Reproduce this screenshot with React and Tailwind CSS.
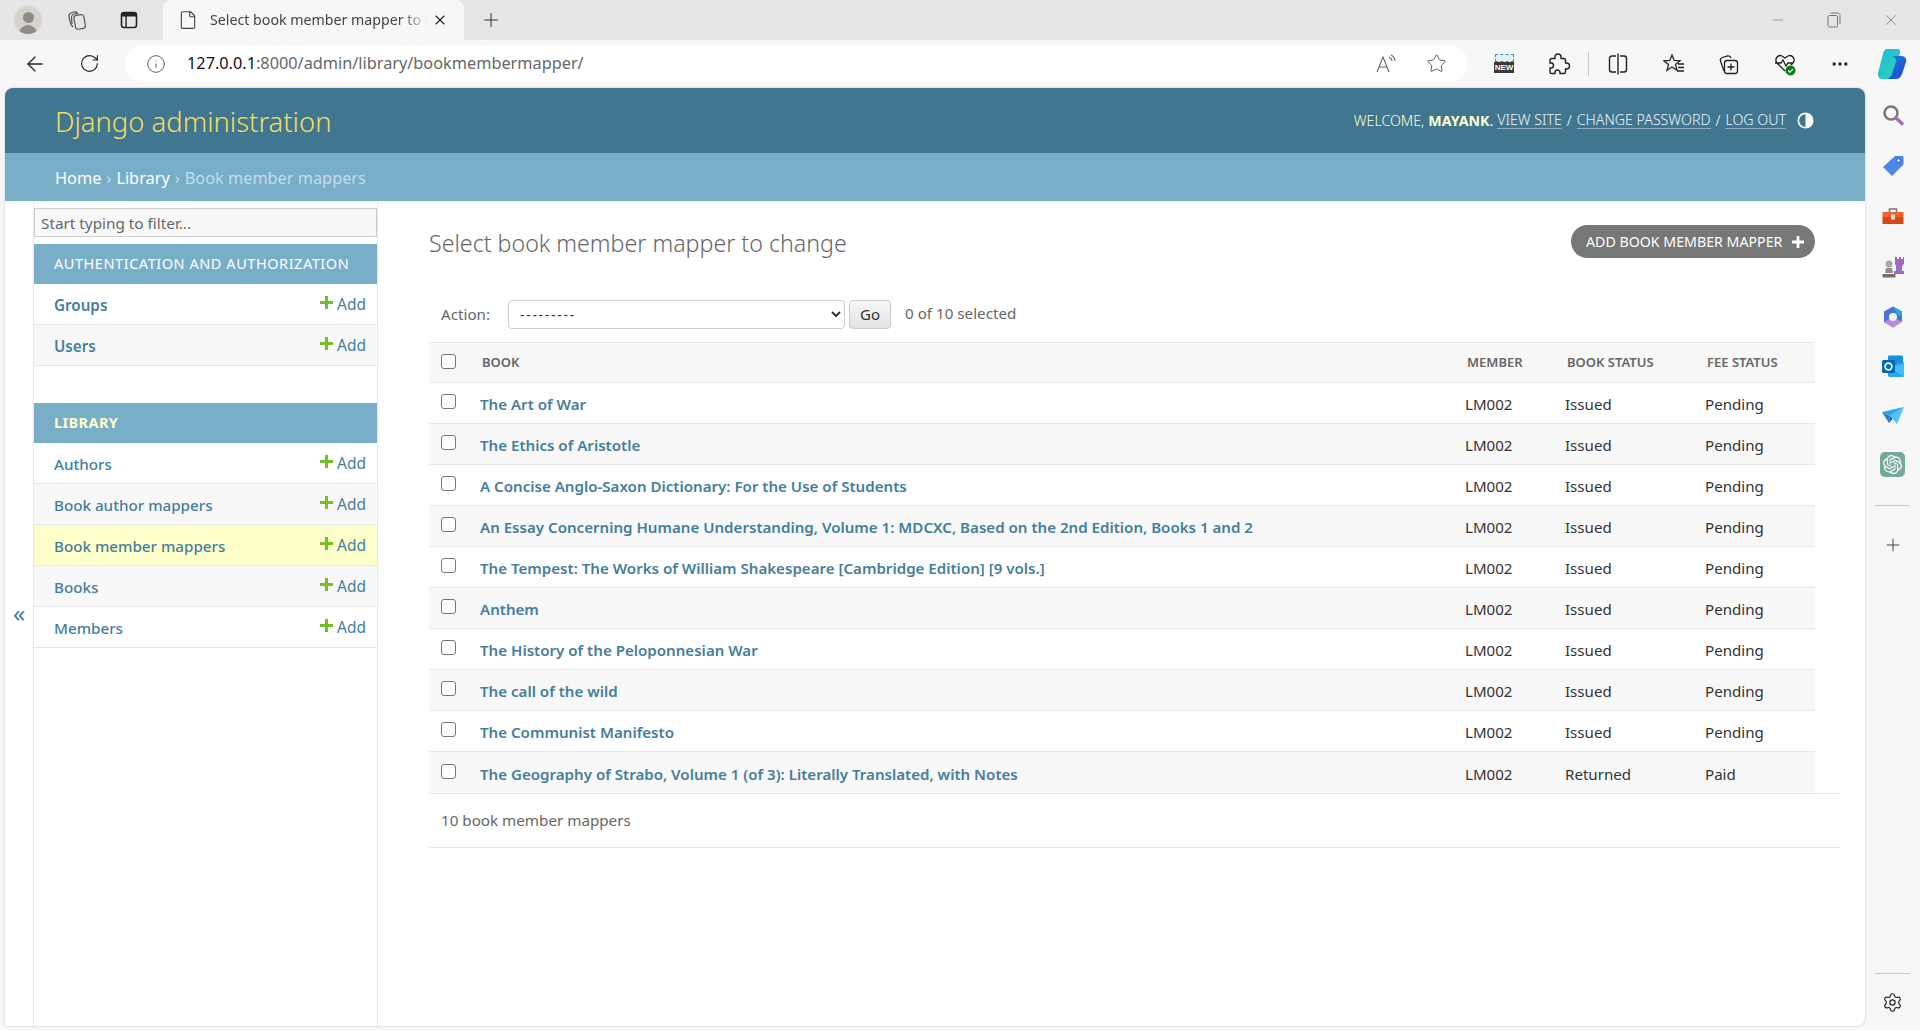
import React from 'react';
import { ArrowLeft, RotateCw, Info, Star, X, Plus, Minus, File, Settings, Ellipsis } from 'lucide-react';
import { SiOpenai } from 'react-icons/si';

const rows = [
  ['The Art of War', 'Issued', 'Pending'],
  ['The Ethics of Aristotle', 'Issued', 'Pending'],
  ['A Concise Anglo-Saxon Dictionary: For the Use of Students', 'Issued', 'Pending'],
  ['An Essay Concerning Humane Understanding, Volume 1: MDCXC, Based on the 2nd Edition, Books 1 and 2', 'Issued', 'Pending'],
  ['The Tempest: The Works of William Shakespeare [Cambridge Edition] [9 vols.]', 'Issued', 'Pending'],
  ['Anthem', 'Issued', 'Pending'],
  ['The History of the Peloponnesian War', 'Issued', 'Pending'],
  ['The call of the wild', 'Issued', 'Pending'],
  ['The Communist Manifesto', 'Issued', 'Pending'],
  ['The Geography of Strabo, Volume 1 (of 3): Literally Translated, with Notes', 'Returned', 'Paid'],
];

const PlusMark = ({ color = '#70bf2b', size = 13 }) => (
  <svg width={size} height={size} viewBox="0 0 13 13" className="shrink-0">
    <path d="M5 0h3v5h5v3H8v5H5V8H0V5h5z" fill={color} />
  </svg>
);

const Checkbox = () => (
  <input
    type="checkbox"
    readOnly
    className="appearance-none w-[15px] h-[15px] bg-white border border-[#767676] rounded-[3px] block"
  />
);

const ModelRow = ({ name, alt, active, strong }) => (
  <div
    className={`h-[41px] pt-[2px] flex items-center justify-between pl-5 pr-[11px] border-b border-[#e8e8e8] ${
      active ? 'bg-[#ffffcc]' : alt ? 'bg-[#f8f8f8]' : 'bg-white'
    }`}
  >
    <span className={`text-[15.200px] text-[#447e9b] ${strong ? 'font-semibold' : 'font-medium'}`}>{name}</span>
    <span className="flex items-center gap-[4px] text-[15.500px] text-[#447e9b]">
      <span className="-mt-[5px]"><PlusMark /></span>
      Add
    </span>
  </div>
);

const TabStrip = () => (
  <div className="h-10 bg-[#e6e6e6] flex items-center shrink-0 text-[#333]">
    <div className="ml-[14px] w-7 h-7 rounded-full bg-[#d6d3cf] flex flex-col items-center justify-end overflow-hidden">
      <div className="w-[11px] h-[11px] rounded-full bg-[#8f8b85] mb-[2px]" />
      <div className="w-[18px] h-[9px] rounded-t-full bg-[#8f8b85]" />
    </div>
    <svg width="22" height="22" viewBox="0 0 22 22" fill="none" stroke="#555" strokeWidth="1.2" className="ml-[24px]">
      <rect x="8.500" y="6" width="10" height="14" rx="2.500" transform="rotate(-10 13 12)" />
      <path d="M7 18c-1-1-2-2-2.500-4L3 8c-.4-2 .5-3.500 2-4l3-1c1.500-.3 3 0 4 2" />
      <path d="M6 15 5.500 8c0-1.500 1-2.500 2.500-3l4-.5" />
    </svg>
    <svg width="18" height="18" viewBox="0 0 18 18" fill="none" className="ml-[32px]">
      <rect x="1.500" y="1.500" width="15" height="15" rx="2.500" stroke="#222" strokeWidth="1.600" />
      <path d="M2 2h14v3.500H2z" fill="#222" />
      <path d="M6 5v11" stroke="#222" strokeWidth="1.400" />
    </svg>
    <div className="ml-[25px] w-[301px] h-10 bg-[#f7f7f7] rounded-t-lg flex items-center pl-[15px]">
      <File size={20} strokeWidth={1.3} className="text-[#444]" />
      <span className="ml-[12px] w-[218px] overflow-hidden whitespace-nowrap text-[14.200px] text-[#444] [mask-image:linear-gradient(to_right,black_88%,transparent)]">
        Select book member mapper to change
      </span>
      <X size={16} strokeWidth={1.6} className="ml-[4px] text-[#222]" />
    </div>
    <Plus size={22} strokeWidth={1.1} className="ml-[16px] text-[#333]" />
    <div className="ml-auto flex items-center gap-[41px] pr-[20px] text-[#777]">
      <Minus size={16} strokeWidth={1} />
      <svg width="14" height="16" viewBox="0 0 14 16" fill="none" stroke="#777" strokeWidth="1">
        <rect x="1" y="3.500" width="9.500" height="11.500" rx="1.500" />
        <path d="M3.500 1h7c1.500 0 2.500 1 2.500 2.500V12" />
      </svg>
      <X size={18} strokeWidth={1} />
    </div>
  </div>
);

const Toolbar = () => (
  <div className="h-[48px] bg-[#f7f7f7] flex items-start pt-[5px] shrink-0">
    <div className="w-[125px] h-[37px] flex items-center">
      <ArrowLeft size={24} strokeWidth={1.3} className="ml-[23px] text-[#222]" />
      <RotateCw size={21} strokeWidth={1.3} className="ml-[32px] text-[#222]" />
    </div>
    <div className="w-[1343px] h-[37px] bg-white rounded-full flex items-center pl-[21px] pr-[21px]">
      <Info size={20} strokeWidth={1.1} className="text-[#555]" />
      <span className="ml-[21px] text-[16.300px] text-[#666]">
        <span className="text-[#111]">127.0.0.1</span>:8000/admin/library/bookmembermapper/
      </span>
      <span className="ml-auto flex items-center gap-[28px] text-[#555]">
        <svg width="24" height="24" viewBox="0 0 24 24" fill="none" stroke="#666" strokeWidth="1.100">
          <path d="M3 20 9 5l6 15M5 15h8M15 5c2 1 3 2 3 4M17 3c3 1.500 4 4 4 6" />
        </svg>
        <Star size={21} strokeWidth={1.1} />
      </span>
    </div>
    <div className="h-[37px] flex items-center">
      <div className="ml-[26px] w-[20px] flex flex-col items-center">
        <div className="w-[19px] h-[8px] border border-dashed border-[#3a95b5] bg-[#dff1f7]" />
        <div className="w-[20px] h-[11px] bg-[#3a3a3a] text-white text-[8px] font-bold leading-[11px] text-center font-['Liberation_Sans',sans-serif]">NEW</div>
      </div>
      <svg width="24" height="24" viewBox="0 0 24 24" fill="none" stroke="#222" strokeWidth="1.400" className="ml-[33px]">
        <path d="M8 6.500V5a3 3 0 0 1 6 0v1.500h3A1.500 1.500 0 0 1 18.500 8v3h1a3 3 0 0 1 0 6h-1v3a1.500 1.500 0 0 1-1.500 1.500H13v-1a2.500 2.500 0 0 0-5 0v1H4.500A1.500 1.500 0 0 1 3 20v-4h1a2.500 2.500 0 0 0 0-5H3V8a1.500 1.500 0 0 1 1.500-1.500z" />
      </svg>
      <div className="ml-[17px] w-px h-[24px] bg-[#c8c8c8]" />
      <svg width="20" height="24" viewBox="0 0 20 24" fill="none" stroke="#222" strokeWidth="1.400" className="ml-[19px]">
        <path d="M8 4H4C2.500 4 1.500 5 1.500 6.500v11C1.500 19 2.500 20 4 20h4M12 4h4c1.500 0 2.500 1 2.500 2.500v11c0 1.500-1 2.500-2.500 2.500h-4M10 1.500v21" />
      </svg>
      <svg width="22" height="22" viewBox="0 0 22 22" fill="none" stroke="#222" strokeWidth="1.300" className="ml-[35px]">
        <path d="m9 2 2.200 5.500 5.800.4-4.500 3.700 1.500 5.600L9 14l-5 3.200 1.500-5.600L1 7.900l5.800-.4zM15 11h6M15 14.500h6M14 18h7" />
      </svg>
      <svg width="22" height="22" viewBox="0 0 22 22" fill="none" stroke="#222" strokeWidth="1.300" className="ml-[33px]">
        <rect x="6.500" y="7.500" width="13" height="13" rx="2.500" />
        <path d="M13 10.500v7M9.500 14h7M6 18 2.500 8c-.5-2 .3-3 2-3.500l5-1.500c2-.4 3 .5 3.500 2" />
      </svg>
      <svg width="24" height="24" viewBox="0 0 24 24" fill="none" className="ml-[33px]">
        <path d="M12 19 4 11C1 7 5 2 9 4l3 2 3-2c4-2 8 3 5 7l-2 2M2 11h6l2-3 3 6 2-3h5" stroke="#222" strokeWidth="1.300" />
        <circle cx="17.500" cy="18.500" r="5" fill="#107c10" />
        <path d="m15.300 18.500 1.600 1.600 3-3" stroke="#fff" strokeWidth="1.300" />
      </svg>
      <Ellipsis size={20} strokeWidth={2} className="ml-[33px] text-[#222]" />
      <svg width="30" height="32" viewBox="0 0 30 32" className="ml-[27px]">
        <defs>
          <linearGradient id="cpa" x1="0" y1="0" x2="1" y2="1">
            <stop offset="0" stopColor="#1db6e8" />
            <stop offset="1" stopColor="#2fd9a6" />
          </linearGradient>
          <linearGradient id="cpb" x1="0" y1="0" x2="1" y2="1">
            <stop offset="0" stopColor="#1a7fe0" />
            <stop offset="1" stopColor="#2246c8" />
          </linearGradient>
        </defs>
        <path d="M10 1h10c3 0 3.500 2 3 4L17 26c-1 3-3 5-6 5H5c-3 0-4.500-3-4-6l5-19c.5-3 2-5 4-5z" fill="url(#cpa)" />
        <path d="M15 8h9c4 0 6 3 5 6l-4 12c-1 3-3 5-7 5h-8c3-1 4-3 5-5l4-13c.5-2-1-4-4-5z" fill="url(#cpb)" />
      </svg>
    </div>
  </div>
);

const Rail = () => (
  <div className="w-[55px] flex flex-col items-center shrink-0 pt-[15px]">
    <svg width="24" height="24" viewBox="0 0 24 24" fill="none">
      <circle cx="10" cy="10" r="6.500" stroke="#777" strokeWidth="2.500" />
      <path d="m15.500 15.500 5.500 5" stroke="#a06cc8" strokeWidth="3.500" strokeLinecap="round" />
    </svg>
    <svg width="24" height="24" viewBox="0 0 24 24" className="mt-[27px]">
      <path d="M14 2h7c1 0 1.500.5 1.500 1.500v7L11 22 2 13z" fill="#4f87e6" />
      <circle cx="17.500" cy="6.500" r="2" fill="#d9e6fb" stroke="#2b5bb5" />
    </svg>
    <svg width="24" height="24" viewBox="0 0 24 24" className="mt-[27px]">
      <path d="M8.500 7V4h7v3" fill="none" stroke="#777" strokeWidth="1.600" />
      <path d="M1.500 7h21v5h-21z" fill="#f2622e" />
      <path d="M1.500 12h21v7h-21z" fill="#d24a17" />
      <rect x="10" y="9.500" width="4" height="5" fill="#d9d9d9" />
    </svg>
    <svg width="24" height="24" viewBox="0 0 24 24" className="mt-[26px]">
      <path d="M14 2h2v2h2V2h2v2h2V2h1v7l-2 2v5h2v3h-10v-3h2v-5l-1-2z" fill="#9a6cc8" />
      <circle cx="8" cy="9" r="3.500" fill="#a8a8a8" />
      <path d="M5 13h6l1 5H4z" fill="#8f8f8f" />
      <path d="M1.500 19h13v3.500h-13z" fill="#6f6f6f" />
    </svg>
    <svg width="24" height="24" viewBox="0 0 24 24" fill="none" className="mt-[26px]">
      <path d="M12 1.500 21 6.500v10L12 22.500 3 17V6.500z" fill="#4a6fd8" />
      <path d="M12 1.500 21 6.500v6l-5-3c-1-4-4-6-4-8z" fill="#2aa8d8" />
      <path d="M3 17 12 22.500 21 17l-5-3c-2 2-6 2-8 0z" fill="#b98ae0" />
      <circle cx="12" cy="12" r="4" fill="#f7f7f7" />
    </svg>
    <svg width="24" height="24" viewBox="0 0 24 24" className="mt-[25px]">
      <rect x="7" y="1.500" width="15" height="21" rx="1" fill="#1490df" />
      <path d="M9 12 23 8v14a1 1 0 0 1-1 1H8z" fill="#28a8ea" />
      <path d="m8 13 15 10V10z" fill="#50d9ff" opacity="0.500" />
      <rect x="1" y="6" width="13" height="13" rx="1.500" fill="#0364b8" />
      <circle cx="7.500" cy="12.500" r="3.400" fill="none" stroke="#fff" strokeWidth="1.700" />
    </svg>
    <svg width="24" height="24" viewBox="0 0 24 24" className="mt-[25px]">
      <path d="M1 9 23 4 9 13z" fill="#29a9eb" />
      <path d="M23 4 16 21 9 13z" fill="#54c2f2" />
      <path d="M9 13 8 20l3.500-4z" fill="#0b5ea8" />
      <path d="M1 9l7 11 1-7z" fill="#1b7fc8" />
    </svg>
    <div className="mt-[25px] w-[25px] h-[25px] rounded-[5px] bg-[#74aa9c] flex items-center justify-center">
      <SiOpenai size={19} color="#fff" />
    </div>
    <div className="mt-[28px] w-[35px] h-px bg-[#c8c8c8]" />
    <Plus size={20} strokeWidth={1.2} className="mt-[29px] text-[#444]" />
    <div className="mt-auto w-[35px] h-px bg-[#c8c8c8]" />
    <Settings size={21} strokeWidth={1.3} className="mt-[18px] mb-[17px] text-[#222]" />
  </div>
);

const Sidebar = () => (
  <div className="w-[345px] shrink-0 border-x border-[#e8e8e8] -mr-px">
    <div className="pt-[7px] pb-[7px]">
      <input
        readOnly
        placeholder="Start typing to filter..."
        className="block w-full h-[29px] px-[6px] text-[15.300px] bg-[#f8f8f8] border border-[#cccccc] placeholder:text-[#666]"
      />
    </div>
    <div className="h-10 bg-[#79aec8] flex items-center pl-5 text-[14.500px] tracking-[0.55px] text-white whitespace-nowrap">
      AUTHENTICATION AND AUTHORIZATION
    </div>
    <ModelRow name="Groups" strong />
    <ModelRow name="Users" alt strong />
    <div className="mt-[37px] h-10 bg-[#79aec8] flex items-center pl-5 text-[14.500px] font-bold tracking-[0.4px] text-[#ffffcc]">
      LIBRARY
    </div>
    <ModelRow name="Authors" />
    <ModelRow name="Book author mappers" alt />
    <ModelRow name="Book member mappers" active />
    <ModelRow name="Books" alt />
    <ModelRow name="Members" />
  </div>
);

const Changelist = () => (
  <div className="flex-1 min-w-0 pl-[52px] pr-[25px] text-[#333]">
    <div className="pt-6 pr-[25px] flex items-start justify-between">
      <h1 className="mt-[2px] text-[23.200px] leading-[33px] font-light text-[#666]">Select book member mapper to change</h1>
      <div className="h-[33px] w-[244px] rounded-full bg-[#777777] flex items-center justify-between pl-[15px] pr-[11px] text-[14.200px] text-white whitespace-nowrap">
        ADD BOOK MEMBER MAPPER
        <PlusMark color="#fff" size={12} />
      </div>
    </div>

    <div className="mt-[40px] pr-[25px] flex items-center h-[29px]">
      <span className="ml-3 w-[67px] text-[15.200px] text-[#666]">Action:</span>
      <select defaultValue="" className="w-[337px] h-[29px] pl-[7px] pr-1 text-[14px] tracking-[1.7px] text-[#333] bg-white border border-[#cccccc] rounded-[4px]">
        <option value="">---------</option>
      </select>
      <div className="ml-1 w-[42px] h-[29px] flex items-center justify-center text-[15px] text-[#333] border border-[#cccccc] rounded-[4px] bg-gradient-to-b from-[#f8f8f8] to-[#e4e4e4]">
        Go
      </div>
      <span className="ml-[14px] -mt-[2px] text-[15.200px] text-[#666]">0 of 10 selected</span>
    </div>

    <div className="mt-[13px] mr-[25px]">
      <div className="h-[41px] bg-[#f8f8f8] border-y border-[#e8e8e8] grid grid-cols-[52px_985px_100px_140px_1fr] items-center text-[13px] font-semibold text-[#666]">
        <div className="pl-[12px] -mt-[2px]"><Checkbox /></div>
        <div className="pl-px">BOOK</div>
        <div className="pl-px">MEMBER</div>
        <div className="pl-px">BOOK STATUS</div>
        <div className="pl-px">FEE STATUS</div>
      </div>
      {rows.map((row, i) => (
        <div
          key={row[0]}
          className={`h-[41px] pt-[3px] grid grid-cols-[52px_985px_100px_140px_1fr] items-center text-[15.100px] border-b border-[#e8e8e8] ${
            i % 2 === 1 ? 'bg-[#f8f8f8]' : 'bg-white'
          } ${i === 9 ? 'h-[42px]' : ''}`}
        >
          <div className="pl-[12px] -mt-[6px]"><Checkbox /></div>
          <a className="font-semibold text-[#447e9b] whitespace-nowrap -ml-px">{row[0]}</a>
          <div className="-ml-px">LM002</div>
          <div className="-ml-px">{row[1]}</div>
          <div className="-ml-px">{row[2]}</div>
        </div>
      ))}
    </div>

    <div className="h-[55px] pl-3 flex items-center border-t border-b border-[#e8e8e8] -mt-px text-[15.200px] text-[#666]">
      10 book member mappers
    </div>
  </div>
);

const App = () => (
  <div className="w-[1920px] h-[1030px] bg-[#f7f7f7] flex flex-col overflow-hidden font-['Noto_Sans',sans-serif]">
    <TabStrip />
    <Toolbar />
    <div className="flex-1 flex min-h-0 pl-[5px]">
      <div className="w-[1860px] mb-1 bg-white rounded-t-lg rounded-br-lg shadow-[0_0_2px_rgba(0,0,0,0.25)] flex flex-col overflow-hidden">
        <div className="h-[65px] bg-[#417690] flex items-center justify-between pl-[50px] pr-[51px] shrink-0">
          <span className="mt-[3px] text-[27.400px] font-light text-[#f5dd5d]">Django administration</span>
          <div className="flex items-center text-[14.200px] text-[#ffffcc] whitespace-nowrap">
            <span className="font-light">WELCOME,</span> <strong className="ml-1 font-bold">MAYANK</strong>.
            <span className="ml-1 border-b border-white/40 text-[#eef5f8] font-light leading-[17px]">VIEW SITE</span>
            <span className="mx-[5px] text-white font-light">/</span>
            <span className="border-b border-white/40 text-[#eef5f8] font-light leading-[17px]">CHANGE PASSWORD</span>
            <span className="mx-[5px] text-white font-light">/</span>
            <span className="border-b border-white/40 text-[#eef5f8] font-light leading-[17px]">LOG OUT</span>
            <svg width="17" height="17" viewBox="0 0 16 16" className="ml-[11px]">
              <circle cx="8" cy="8" r="7.500" fill="#fff" />
              <path d="M8 2a6 6 0 0 0 0 12z" fill="#417690" />
            </svg>
          </div>
        </div>
        <div className="h-12 pt-[3px] bg-[#79aec8] flex items-center pl-[50px] text-[16.300px] text-white shrink-0">
          Home<span className="mx-[5px] text-[#c4dce8]">›</span>Library
          <span className="mx-[5px] text-[#c4dce8]">›</span><span className="text-[#c4dce8]">Book member mappers</span>
        </div>
        <div className="flex-1 flex min-h-0">
          <div className="w-[28px] shrink-0 flex items-center justify-center pb-[2px] text-[24px] text-[#447e9b]">
            «
          </div>
          <Sidebar />
          <Changelist />
        </div>
      </div>
      <Rail />
    </div>
  </div>
);

export default App;
